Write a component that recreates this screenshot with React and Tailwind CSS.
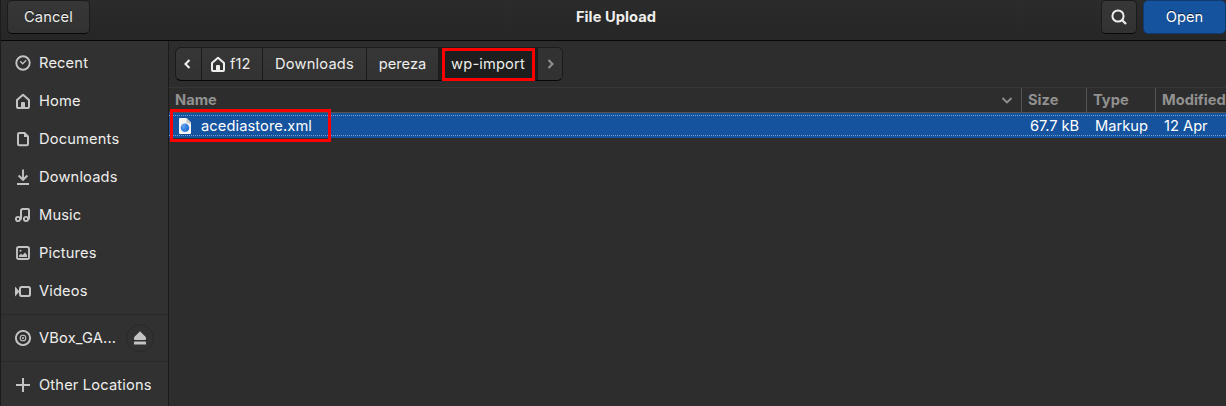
import React from 'react';

const Svg = ({ children, className = 'size-4' }) => (
  <svg viewBox="0 0 16 16" className={`${className} shrink-0`} fill="none" stroke="currentColor" strokeWidth="2">
    {children}
  </svg>
);

const RecentIcon = () => (
  <Svg><circle cx="8" cy="8" r="6.7" strokeWidth="1.9" /><path d="M5.2 6.2 7.7 8.8 11.2 5.3" strokeWidth="1.3" /></Svg>
);
const HomeIcon = () => (
  <Svg>
    <path d="M2 14V7L8 1.8l6 5.200V14q0 .9-.9.9H2.9Q2 14.900 2 14Z" strokeLinejoin="round" strokeWidth="2" />
    <path d="M6 15V10q0-1 1-1h2q1 0 1 1v5Z" fill="currentColor" stroke="none" />
  </Svg>
);
const DocIcon = () => (
  <Svg>
    <path d="M4.500 2H9.500L13 5.500V13q0 1.200-1.200 1.200H4.200Q3 14.200 3 13V3.300Q3 2 4.500 2Z" strokeWidth="2" />
    <path d="M9 1.500V6H13.500Z" fill="currentColor" stroke="none" />
  </Svg>
);
const DownIcon = () => (
  <Svg><path d="M8 .5V10.500M3.600 6.500 8 10.800l4.400-4.300" strokeWidth="1.900" /><path d="M2 15H14" /></Svg>
);
const MusicIcon = () => (
  <Svg>
    <circle cx="3" cy="12" r="2.100" strokeWidth="1.900" /><circle cx="11" cy="12" r="2.100" strokeWidth="1.900" />
    <path d="M6 12.500V4q0-2 2-2H13q1 0 1 1v9.500" strokeWidth="2" strokeLinejoin="round" />
  </Svg>
);
const PictureIcon = () => (
  <Svg>
    <rect x="2" y="2" width="12" height="12" rx="1.800" strokeWidth="1.900" />
    <path d="M4 12V10.500L6 8.800 7.500 10 10 7.500 12 10v2Z" fill="currentColor" stroke="none" />
    <circle cx="5.500" cy="5.700" r="1" fill="currentColor" stroke="none" />
  </Svg>
);
const VideoIcon = () => (
  <Svg>
    <rect x="5" y="4" width="10" height="9" rx="1.800" strokeWidth="2" />
    <path d="M0 3.500 4.500 8.500 0 13.500Z" fill="currentColor" stroke="none" />
  </Svg>
);
const DiscIcon = () => (
  <Svg>
    <circle cx="8" cy="8" r="7.100" strokeWidth="1.900" /><circle cx="8" cy="8" r="2.800" strokeWidth="1.100" />
    <circle cx="8" cy="8" r="1.100" fill="currentColor" stroke="none" />
  </Svg>
);
const PlusIcon = () => <Svg><path d="M8 1V15M1 8H15" /></Svg>;

const places = [
  ['Recent', RecentIcon], ['Home', HomeIcon], ['Documents', DocIcon], ['Downloads', DownIcon],
  ['Music', MusicIcon], ['Pictures', PictureIcon], ['Videos', VideoIcon],
];

function Place({ label, Icon, children }) {
  return (
    <div className="flex h-[38px] items-center pl-[14px] text-[#c3c3c3]">
      <Icon />
      <span className="ml-[8px] whitespace-nowrap tracking-[0.16px] text-[#eeeeec]">{label}</span>
      {children}
    </div>
  );
}

const FileIcon = () => (
  <svg viewBox="0 0 12 16" className="h-4 w-3 shrink-0">
    <path d="M1 0H7.500L12 4.500V15q0 1-1 1H1q-1 0-1-1V1Q0 0 1 0Z" fill="#f6f5f4" />
    <path d="M7.500 0 12 4.500V6L7.500 4.500Z" fill="#c9c7c3" />
    <circle cx="6" cy="9.700" r="4.300" fill="#3584e4" />
    <path d="M3 7.500Q5 5 7 6.500L5.500 8 6 10 4 11Z" fill="#62a0ea" />
    <path d="M7.500 10 10 9Q10 12 7.500 13Z" fill="#2a70cc" />
  </svg>
);

export default function App() {
  return (
    <div className="relative flex h-[406px] w-[1226px] flex-col overflow-hidden border-l border-[#1b1b1b] bg-[#2d2d2d] font-['Inter',sans-serif] text-[14.67px] leading-5 text-[#eeeeec]">
      <header className="flex h-[41px] shrink-0 items-start border-b border-[#070707] bg-linear-to-b from-[#2b2b2b] to-[#262626]">
        <button className="ml-[6px] h-[34px] w-[83px] rounded-[5px] border border-[#1b1b1b] border-b-[#070707] bg-linear-to-b from-[#373737] to-[#323232] tracking-[0.15px] [text-shadow:0_-1px_#0009]">Cancel</button>
        <h1 className="flex-1 pt-[7px] pl-[41px] text-center font-bold tracking-[0.05px]">File Upload</h1>
        <button className="mr-[6px] flex h-[34px] w-[36px] items-center justify-center rounded-[5px] border border-[#1b1b1b] border-b-[#070707] bg-linear-to-b from-[#373737] to-[#323232] pr-[1px]">
          <Svg><circle cx="7" cy="7" r="5.600" /><path d="m11 11 4 4" strokeWidth="2.300" /></Svg>
        </button>
        <button className="h-[34px] w-[83px] rounded-[5px] border border-[#0f3b71] bg-[#15539e] text-white [text-shadow:0_-1px_#0009]">Open</button>
      </header>
      <div className="flex min-h-0 flex-1">
        <nav className="w-[168px] shrink-0 border-r border-[#1b1b1b] bg-[#313131] pt-[3px]">
          {places.map(([label, Icon]) => <Place key={label} label={label} Icon={Icon} />)}
          <div className="mt-[4px] mb-[4px] h-px bg-[#292929]" />
          <Place label="VBox_GA..." Icon={DiscIcon}>
            <button className="mr-[14px] ml-auto flex size-7 shrink-0 items-center justify-center rounded-full border border-[#292929]">
              <svg viewBox="0 0 12 14" className="h-[14px] w-3" fill="currentColor"><path d="M6 .3 12 6.300V8Q12 9 11 9H1Q0 9 0 8V6.300Z" /><rect y="10.500" width="12" height="3" rx=".5" /></svg>
            </button>
          </Place>
          <div className="mt-[4px] mb-[4px] h-px bg-[#292929]" />
          <Place label="Other Locations" Icon={PlusIcon} />
        </nav>
        <main className="min-w-0 flex-1">
          <div className="h-[46px] pt-[6px] pl-[6px]">
            <div className="flex h-[34px] w-[388px] overflow-hidden rounded-[6px] border border-[#1b1b1b] border-b-[#070707] bg-linear-to-b from-[#373737] to-[#323232] [text-shadow:0_-1px_#0009]">
              <button className="flex w-[26px] items-center justify-center border-r border-[#1b1b1b] pr-[2px]">
                <Svg><path d="m9.500 4-4 4 4 4" strokeWidth="2.100" /></Svg>
              </button>
              <button className="flex w-[61px] items-center border-r border-[#1b1b1b] pl-[8px]"><HomeIcon /><span className="ml-[4px]">f12</span></button>
              <button className="w-[104px] border-r border-[#1b1b1b] tracking-[0.2px]">Downloads</button>
              <button className="w-[72px] border-r border-[#1b1b1b]">pereza</button>
              <button className="w-[99px] border-r border-[#1b1b1b] bg-[#1e1e1e] tracking-[0.15px]">wp-import</button>
              <button className="flex flex-1 items-center justify-center bg-[#323232] text-[#919190]">
                <Svg><path d="m6.500 4 4 4-4 4" /></Svg>
              </button>
            </div>
          </div>
          <div className="flex h-[26px] border-t border-b border-t-[#373737] border-b-[#555351] font-bold text-[#919190]">
            <div className="flex w-[853px] shrink-0 items-center justify-between border-r border-[#555] pr-[6px] pl-[6px]">
              <span>Name</span>
              <Svg><path d="m3.500 6 4.500 4.500L12.500 6" strokeWidth="1.800" /></Svg>
            </div>
            <div className="flex w-[65px] shrink-0 items-center border-r border-[#555] pl-[6px]">Size</div>
            <div className="flex w-[69px] shrink-0 items-center border-r border-[#555] pl-[6px]">Type</div>
            <div className="flex items-center pl-[6px]">Modified</div>
          </div>
          <div className="h-[25px] bg-[#15539e] py-[2px] text-white">
            <div className="flex h-[21px] items-center border-y border-dotted border-[#73a1d4] pl-[10px]">
              <FileIcon />
              <span className="ml-[10px] w-[820px] tracking-[0.1px]">acediastore.xml</span>
              <span className="ml-[9px] w-[65px] whitespace-nowrap tracking-[-0.1px]">67.7 kB</span>
              <span className="w-[69px]">Markup</span>
              <span className="whitespace-nowrap">12 Apr</span>
            </div>
          </div>
        </main>
      </div>
      <div className="absolute top-[109px] left-[169px] h-[33px] w-[161px] border-3 border-[#fe0000]" />
      <div className="absolute top-[48px] left-[441px] h-[33px] w-[93px] border-3 border-[#fe0000]" />
    </div>
  );
}
